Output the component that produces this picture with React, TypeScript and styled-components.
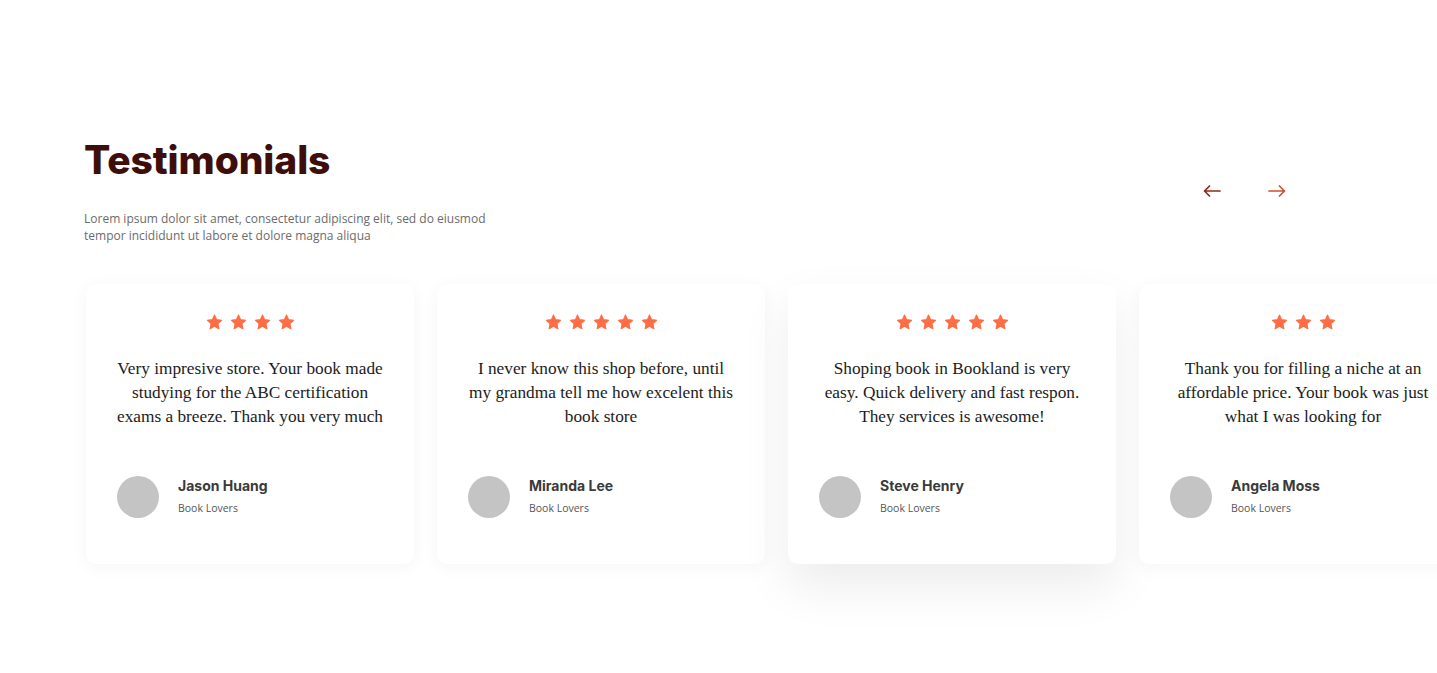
import React from 'react';
import styled, { createGlobalStyle } from 'styled-components';

type Testimonial = {
	rating: number
	text: string
	name: string
	role: string
	active?: boolean
}

const testimonials: Testimonial[] = [
	{ rating: 4, text: 'Very impresive store. Your book made studying for the ABC certification exams a breeze. Thank you very much', name: 'Jason Huang', role: 'Book Lovers' },
	{ rating: 5, text: 'I never know this shop before, until my grandma tell me how excelent this book store', name: 'Miranda Lee', role: 'Book Lovers' },
	{ rating: 5, text: 'Shoping book in Bookland is very easy. Quick delivery and fast respon. They services is awesome!', name: 'Steve Henry', role: 'Book Lovers', active: true },
	{ rating: 3, text: 'Thank you for filling a niche at an affordable price. Your book was just what I was looking for', name: 'Angela Moss', role: 'Book Lovers' },
]

const Star = () => (
	<svg width="17" height="16" viewBox="0 0 24 23">
		<path
			d="M12 1.5l3.1 6.6 7.1.9-5.2 5 1.3 7.1L12 17.7l-6.3 3.4 1.3-7.1-5.2-5 7.1-.9z"
			fill="#ff6d45"
			stroke="#ff6d45"
			strokeWidth="1.5"
			strokeLinejoin="round"
		/>
	</svg>
)

const Arrow = ({ dir, color }: { dir: 'left' | 'right'; color: string }) => (
	<svg width="18" height="12" viewBox="0 0 18 12" style={{ transform: dir === 'right' ? 'scaleX(-1)' : undefined }}>
		<path d="M1.5 6H17M6.5 1L1.5 6l5 5" fill="none" stroke={color} strokeWidth="1.7" strokeLinecap="round" strokeLinejoin="round" />
	</svg>
)

export default function App() {
	return (
		<>
			<GlobalStyle />
			<Section>
				<Header>
					<div>
						<Title>Testimonials</Title>
						<Lead>
							Lorem ipsum dolor sit amet, consectetur adipiscing elit, sed do eiusmod
							<br />
							tempor incididunt ut labore et dolore magna aliqua
						</Lead>
					</div>
					<Nav>
						<NavButton aria-label="previous"><Arrow dir="left" color="#8e2a18" /></NavButton>
						<NavButton aria-label="next"><Arrow dir="right" color="#c8532e" /></NavButton>
					</Nav>
				</Header>

				<Track>
					{testimonials.map((t) => (
						<Card key={t.name} $active={t.active}>
							<Stars>
								{Array.from({ length: t.rating }).map((_, i) => <Star key={i} />)}
							</Stars>
							<Quote>{t.text}</Quote>
							<Author>
								<Avatar />
								<div>
									<Name>{t.name}</Name>
									<Role>{t.role}</Role>
								</div>
							</Author>
						</Card>
					))}
				</Track>
			</Section>
		</>
	)
}

const GlobalStyle = createGlobalStyle`
	body {
		margin: 0;
		background: #fff;
		font-family: "Open Sans", sans-serif;
		overflow: hidden;
	}
`

const Section = styled.section`
	width: 1437px;
	height: 673px;
	padding: 138px 0 0 84px;
	box-sizing: border-box;
	overflow: hidden;
`

const Header = styled.div`
	display: flex;
	justify-content: space-between;
	align-items: flex-start;
	padding-right: 151px;
`

const Title = styled.h2`
	margin: 0;
	font-family: Inter, sans-serif;
	font-weight: 800;
	font-size: 39px;
	line-height: 44px;
	letter-spacing: -0.1px;
	color: #3e0f0a;
`

const Lead = styled.p`
	margin: 28px 0 0;
	font-size: 12px;
	line-height: 17px;
	color: #6b6b6b;
`

const Nav = styled.div`
	display: flex;
	gap: 47px;
	margin-top: 47px;
`

const NavButton = styled.button`
	border: 0;
	background: none;
	padding: 0;
	display: flex;
	cursor: pointer;
`

const Track = styled.div`
	display: flex;
	gap: 23px;
	margin-top: 40px;
	margin-left: 2px;
`

const Card = styled.article<{ $active?: boolean }>`
	flex: 0 0 328px;
	height: 280px;
	box-sizing: border-box;
	padding: 30px 30px 0;
	background: #fff;
	border-radius: 10px;
	box-shadow: ${(p) => (p.$active ? '0 22px 50px rgba(0, 0, 0, 0.08)' : '0 3px 18px rgba(0, 0, 0, 0.045)')};
	display: flex;
	flex-direction: column;
`

const Stars = styled.div`
	display: flex;
	justify-content: center;
	gap: 7px;
	height: 16px;
`

const Quote = styled.p`
	margin: 27px 0 0;
	height: 72px;
	font-family: "Liberation Serif", serif;
	font-size: 17.3px;
	line-height: 24px;
	text-align: center;
	color: #1c1c1c;
`

const Author = styled.div`
	display: flex;
	align-items: center;
	gap: 19px;
	margin-top: 47px;
	padding-left: 1px;
`

const Avatar = styled.div`
	width: 42px;
	height: 42px;
	border-radius: 50%;
	background: #c4c4c4;
`

const Name = styled.div`
	font-family: Inter, sans-serif;
	font-weight: 700;
	font-size: 14px;
	line-height: 18px;
	color: #3a3a3a;
	margin-top: -3px;
`

const Role = styled.div`
	font-family: "Open Sans", sans-serif;
	font-size: 10.5px;
	line-height: 14px;
	color: #555;
	margin-top: 6px;
`
